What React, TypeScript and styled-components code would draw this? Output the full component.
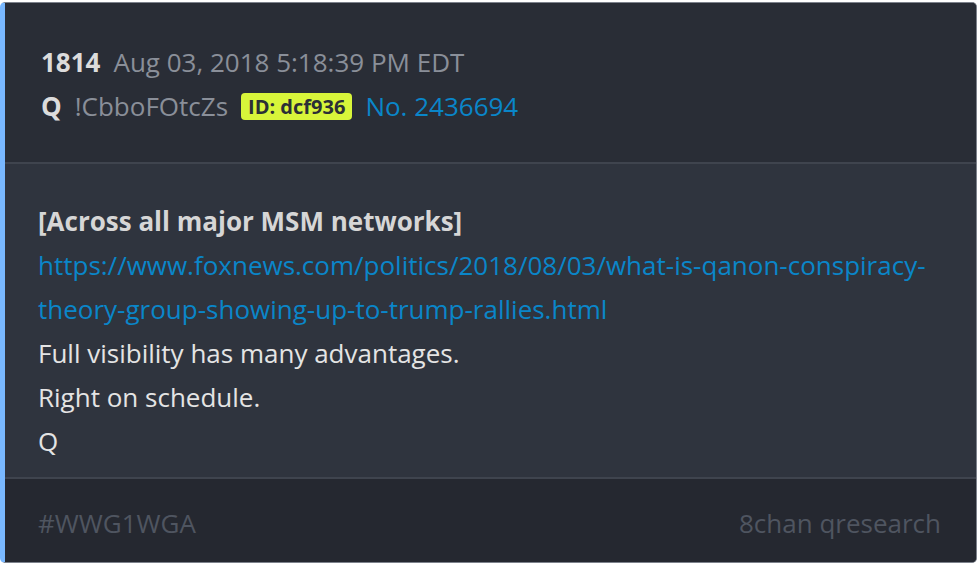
import React from "react";
import styled, { createGlobalStyle } from "styled-components";

const Global = createGlobalStyle`
  html, body { margin: 0; padding: 0; background: #ffffff; }
  body { font-family: "Open Sans", "Noto Sans", sans-serif; }
`;

const Page = styled.div`
  padding: 2px 1px 1px 0;
`;

const Card = styled.article`
  display: flex;
  flex-direction: column;
  border: 1px solid #7d828c;
  border-left: 5px solid #79b8ff;
  border-radius: 5px;
  overflow: hidden;
  background: #2f343e;
`;

const Header = styled.header`
  background: #292d36;
  padding: 37px 24px 34px 36px;
  border-bottom: 2px solid #3f444e;
`;

const Line = styled.div`
  display: flex;
  align-items: center;
  gap: 13px;
  height: 44px;
  font-size: 26px;
`;

const Strong = styled.span`
  color: #dcdcdc;
  font-weight: 700;
`;

const Muted = styled.span`
  color: #8a8f99;
`;

const Badge = styled.span`
  background: #d8f53a;
  color: #2b2f36;
  font-weight: 700;
  font-size: 20px;
  line-height: 27px;
  padding: 0 7px;
  border-radius: 4px;
`;

const PostNo = styled.span`
  color: #0a86c9;
`;

const Body = styled.section`
  padding: 35px 40px 14px 33px;
  font-size: 26px;
  line-height: 44px;
  color: #e4e4e4;
`;

const Para = styled.div<{ $bold?: boolean }>`
  font-weight: ${(p) => (p.$bold ? 700 : 400)};
  color: ${(p) => (p.$bold ? "#d6d6d6" : "#e4e4e4")};
`;

const Link = styled.a`
  color: #0a86c9;
  text-decoration: none;
`;

const Footer = styled.footer`
  background: #252830;
  border-top: 2px solid #3f444e;
  height: 85px;
  box-sizing: border-box;
  display: flex;
  align-items: center;
  justify-content: space-between;
  padding: 5px 35px 0 33px;
  font-size: 26px;
  color: #4f5560;
`;

export default function App() {
  return (
    <>
      <Global />
      <Page>
        <Card>
          <Header>
            <Line>
              <Strong>1814</Strong>
              <Muted>Aug 03, 2018 5:18:39 PM EDT</Muted>
            </Line>
            <Line>
              <Strong>Q</Strong>
              <Muted>!CbboFOtcZs</Muted>
              <Badge>ID: dcf936</Badge>
              <PostNo>No. 2436694</PostNo>
            </Line>
          </Header>
          <Body>
            <Para $bold>[Across all major MSM networks]</Para>
            <Para>
              <Link href="#">
                https://www.foxnews.com/politics/2018/08/03/what-is-qanon-conspiracy-theory-group-showing-up-to-trump-rallies.html
              </Link>
            </Para>
            <Para>Full visibility has many advantages.</Para>
            <Para>Right on schedule.</Para>
            <Para>Q</Para>
          </Body>
          <Footer>
            <span>#WWG1WGA</span>
            <span>8chan qresearch</span>
          </Footer>
        </Card>
      </Page>
    </>
  );
}
